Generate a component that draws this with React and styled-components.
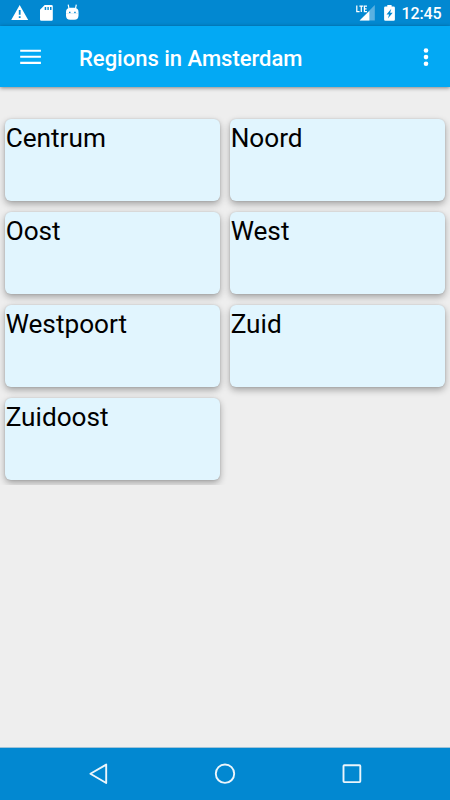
import React from "react";
import styled, { createGlobalStyle } from "styled-components";

const GlobalStyle = createGlobalStyle`
  * { box-sizing: border-box; }
  body { margin: 0; font-family: Roboto, "Liberation Sans", sans-serif; background: #eeeeee; }
`;

const Screen = styled.div`
  display: flex;
  flex-direction: column;
  width: 450px;
  height: 800px;
  overflow: hidden;
  background: #eeeeee;
`;

const StatusBar = styled.header`
  display: flex;
  align-items: flex-start;
  flex: 0 0 26px;
  background: #0288d1;
  color: #fff;
`;

const StatusGroup = styled.div`
  display: flex;
  height: 26px;
  margin-left: ${(p) => (p.$end ? "auto" : "0")};
`;

const Clock = styled.time`
  width: 49px;
  padding-left: 0.5px;
  font-size: 16px;
  font-weight: 500;
  line-height: 28px;
  letter-spacing: -0.1px;
  white-space: nowrap;
`;

const AppBar = styled.nav`
  display: flex;
  align-items: center;
  flex: 0 0 61px;
  padding: 0 13px 0 19px;
  background: #03a9f4;
  box-shadow: 0 1px 4px rgba(0, 0, 0, 0.45);
  z-index: 1;
`;

const Title = styled.h1`
  flex: 1;
  margin: 4px 0 0 36px;
  color: #fff;
  font-size: 22px;
  font-weight: 500;
  line-height: 30px;
  white-space: nowrap;
`;

const IconButton = styled.button`
  display: flex;
  padding: 0;
  border: 0;
  background: none;
  color: #fff;
`;

const Content = styled.main`
  flex: 1;
  padding-top: 27px;
`;

const RegionGrid = styled.section`
  display: grid;
  grid-template-columns: 214.5px 214.5px;
  grid-auto-rows: 82.3px;
  gap: 10.7px 10.5px;
  height: 371px;
  padding: 5px 5.25px 0;
  overflow: hidden;
`;

const Card = styled.article`
  padding-left: 0.4px;
  border-radius: 6px;
  background: #e1f5fe;
  box-shadow: 0 3px 7px rgba(0, 0, 0, 0.32), 0 0 2px rgba(0, 0, 0, 0.14);
  color: #000;
  font-size: 26.2px;
  line-height: 38px;
`;

const NavBar = styled.footer`
  display: flex;
  justify-content: center;
  flex: 0 0 53px;
  border-top: 1px solid #9fc3d8;
  background: #0288d1;
`;

const NavButton = styled(IconButton)`
  justify-content: center;
  width: 127px;
  height: 52px;
`;

const regions = ["Centrum", "Noord", "Oost", "West", "Westpoort", "Zuid", "Zuidoost"];

const NotificationIcons = () => (
  <svg width="90" height="26" viewBox="0 0 90 26" fill="#fff">
    <path d="M19.7 5 28.2 20H11.2ZM18.8 10v4.8h1.8V10Zm0 6.2V18h1.8v-1.8Z" fillRule="evenodd" />
    <path fillRule="evenodd" d="M44.7 5h6.8q1.3 0 1.3 1.3v13.2q0 1.3-1.3 1.3H41.3q-1.3 0-1.3-1.3V9.7ZM44.7 7v3h1.5V7Zm2.7 0v3h1.4V7Zm2.6 0v3h1.5V7Z" />
    <path d="M66 13.2h12.5v2.3q0 4.2-4.2 4.2h-4.1q-4.2 0-4.2-4.2Z" />
    <path fillRule="evenodd" d="M66 12q0-3.9 4-4.3h4.5q4 .4 4 4.3v1.4H66ZM69 11.8v1.5h1.5v-1.5Zm5.2 0v1.5h1.5v-1.5Z" />
    <path d="m69 8.7-.8-4M75.5 8.7l.8-4" stroke="#fff" strokeWidth="1.2" />
  </svg>
);

const SignalIcon = () => (
  <svg width="22" height="26" viewBox="355 0 22 26" fill="none">
    <path d="M374.8 5v15.6h-15.2Z" fill="#fff" opacity=".35" />
    <path d="M369.4 11v9.6h-9.8Z" fill="#fff" />
    <path d="M356.8 5.5v6.2h2.8M359.4 6.1h3.8M361.3 6.1v6M367 6.1h-2.6v5.5h2.6M364.4 8.8h2.2" stroke="#fff" strokeWidth="1.25" />
  </svg>
);

const BatteryIcon = () => (
  <svg width="24" height="26" viewBox="377 0 24 26" fill="#fff">
    <path fillRule="evenodd" d="M387.3 5h4.3v1.5h2q1.3 0 1.3 1.3v11.7q0 1.3-1.3 1.3h-8.2q-1.3 0-1.3-1.3V7.8q0-1.3 1.3-1.3h1.9ZM391.3 8.7l-4.8 5.7h2.6l-1.2 4.1 4.8-5.7h-2.6Z" />
  </svg>
);

const MenuIcon = () => (
  <svg width="24" height="24" viewBox="19 45 24 24">
    <path d="M20.2 50.7h20.7M20.2 56.8h20.7M20.2 62.9h20.7" stroke="#fff" strokeWidth="2.1" />
  </svg>
);

const MoreIcon = () => (
  <svg width="22" height="24" viewBox="415 45 22 24" fill="#fff">
    <circle cx="426" cy="50.5" r="2.3" />
    <circle cx="426" cy="57.1" r="2.3" />
    <circle cx="426" cy="63.7" r="2.3" />
  </svg>
);

const navShapes = [
  { name: "Back", shape: <path d="M71.2 16.6v18.4l-15.8-9.2Z" /> },
  { name: "Home", shape: <circle cx="63" cy="25.7" r="9.2" /> },
  { name: "Overview", shape: <rect x="54.5" y="17.3" width="16.8" height="16.8" rx=".8" /> },
];

export default function App() {
  return (
    <Screen>
      <GlobalStyle />
      <StatusBar>
        <StatusGroup><NotificationIcons /></StatusGroup>
        <StatusGroup $end>
          <SignalIcon />
          <BatteryIcon />
          <Clock>12:45</Clock>
        </StatusGroup>
      </StatusBar>
      <AppBar>
        <IconButton aria-label="Menu"><MenuIcon /></IconButton>
        <Title>Regions in Amsterdam</Title>
        <IconButton aria-label="More options"><MoreIcon /></IconButton>
      </AppBar>
      <Content>
        <RegionGrid>
          {regions.map((name) => <Card key={name}>{name}</Card>)}
        </RegionGrid>
      </Content>
      <NavBar>
        {navShapes.map(({ name, shape }) => (
          <NavButton key={name} aria-label={name}>
            <svg width="127" height="52" viewBox="0 0 127 52" fill="none" stroke="#fff" strokeWidth="1.9" strokeLinejoin="round" opacity=".92">
              {shape}
            </svg>
          </NavButton>
        ))}
      </NavBar>
    </Screen>
  );
}
